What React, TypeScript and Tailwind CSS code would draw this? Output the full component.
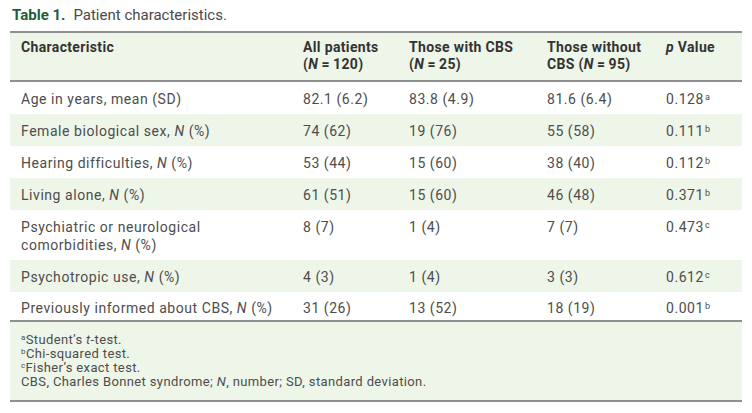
import React from "react";

type Row = { label: React.ReactNode; all: string; cbs: string; noCbs: string; p: string; sup: string };

const N = () => <i>N</i>;
const EQ = "\u2009=\u2009";

const ROWS: Row[] = [
  { label: "Age in years, mean (SD)", all: "82.1 (6.2)", cbs: "83.8 (4.9)", noCbs: "81.6 (6.4)", p: "0.128", sup: "a" },
  { label: <>Female biological sex, <N /> (%)</>, all: "74 (62)", cbs: "19 (76)", noCbs: "55 (58)", p: "0.111", sup: "b" },
  { label: <>Hearing difficulties, <N /> (%)</>, all: "53 (44)", cbs: "15 (60)", noCbs: "38 (40)", p: "0.112", sup: "b" },
  { label: <>Living alone, <N /> (%)</>, all: "61 (51)", cbs: "15 (60)", noCbs: "46 (48)", p: "0.371", sup: "b" },
  { label: <>Psychiatric or neurological<br />comorbidities, <N /> (%)</>, all: "8 (7)", cbs: "1 (4)", noCbs: "7 (7)", p: "0.473", sup: "c" },
  { label: <>Psychotropic use, <N /> (%)</>, all: "4 (3)", cbs: "1 (4)", noCbs: "3 (3)", p: "0.612", sup: "c" },
  { label: <>Previously informed about CBS, <N /> (%)</>, all: "31 (26)", cbs: "13 (52)", noCbs: "18 (19)", p: "0.001", sup: "b" },
];

export default function App() {
  return (
    <div className="w-[752px] h-[413px] bg-white pl-[10px] pr-[10px] pt-[6px]" style={{ fontFamily: "Roboto, 'Liberation Sans', sans-serif" }}>
      <div className="pl-[2px] text-[15px] leading-[18px] text-[#4a4a4a]">
        <span className="font-bold text-[#1c5e3e]">Table 1.</span>
        <span className="ml-[8px]">Patient characteristics.</span>
      </div>
      <table className="mt-[7px] w-[732px] border-collapse table-fixed text-[14px] leading-[18px] tracking-[0.55px] text-[#4d4d4d]">
        <colgroup>
          <col className="w-[282px]" />
          <col className="w-[106px]" />
          <col className="w-[138px]" />
          <col className="w-[119px]" />
          <col className="w-[87px]" />
        </colgroup>
        <thead>
          <tr className="bg-[#eef5e9] border-t-2 border-b-2 border-[#8f8f8f] align-top text-left font-bold text-[#333333] leading-[17px] tracking-[0.35px]">
            <th className="pl-[11px] pt-[6px] pb-[7px]">Characteristic</th>
            <th className="pl-[11px] pt-[6px] pb-[7px]">All patients<br />(<i>N</i>{EQ}120)</th>
            <th className="pl-[11px] pt-[6px] pb-[7px]">Those with CBS<br />(<i>N</i>{EQ}25)</th>
            <th className="pl-[11px] pt-[6px] pb-[7px]">Those without<br />CBS (<i>N</i>{EQ}95)</th>
            <th className="pl-[11px] pt-[6px] pb-[7px]"><i>p</i> Value</th>
          </tr>
        </thead>
        <tbody>
          {ROWS.map((r, i) => {
            const pad = i === 6 ? "pl-[11px] pt-[7px] pb-[3px]" : "pl-[11px] pt-[8px] pb-[6px]";
            return (
              <tr key={i} className={`align-top ${i % 2 === 1 ? "bg-[#eef5e9]" : "bg-white"}`}>
                <td className={pad}>{r.label}</td>
                <td className={pad}>{r.all}</td>
                <td className={pad}>{r.cbs}</td>
                <td className={pad}>{r.noCbs}</td>
                <td className={pad}>
                  {r.p}
                  <sup className="text-[9px] ml-[1px]">{r.sup}</sup>
                </td>
              </tr>
            );
          })}
        </tbody>
        <tfoot>
          <tr className="bg-[#eef5e9] border-t-2 border-b-2 border-[#8f8f8f]">
            <td colSpan={5} className="pl-[11px] pt-[11px] pb-[11px] text-[13px] leading-[14px] tracking-[0.37px] text-[#4d4d4d]">
              <div><sup className="text-[8px]">a</sup>Student’s <i>t</i>-test.</div>
              <div><sup className="text-[8px]">b</sup>Chi-squared test.</div>
              <div><sup className="text-[8px]">c</sup>Fisher’s exact test.</div>
              <div>CBS, Charles Bonnet syndrome; <i>N</i>, number; SD, standard deviation.</div>
            </td>
          </tr>
        </tfoot>
      </table>
    </div>
  );
}
